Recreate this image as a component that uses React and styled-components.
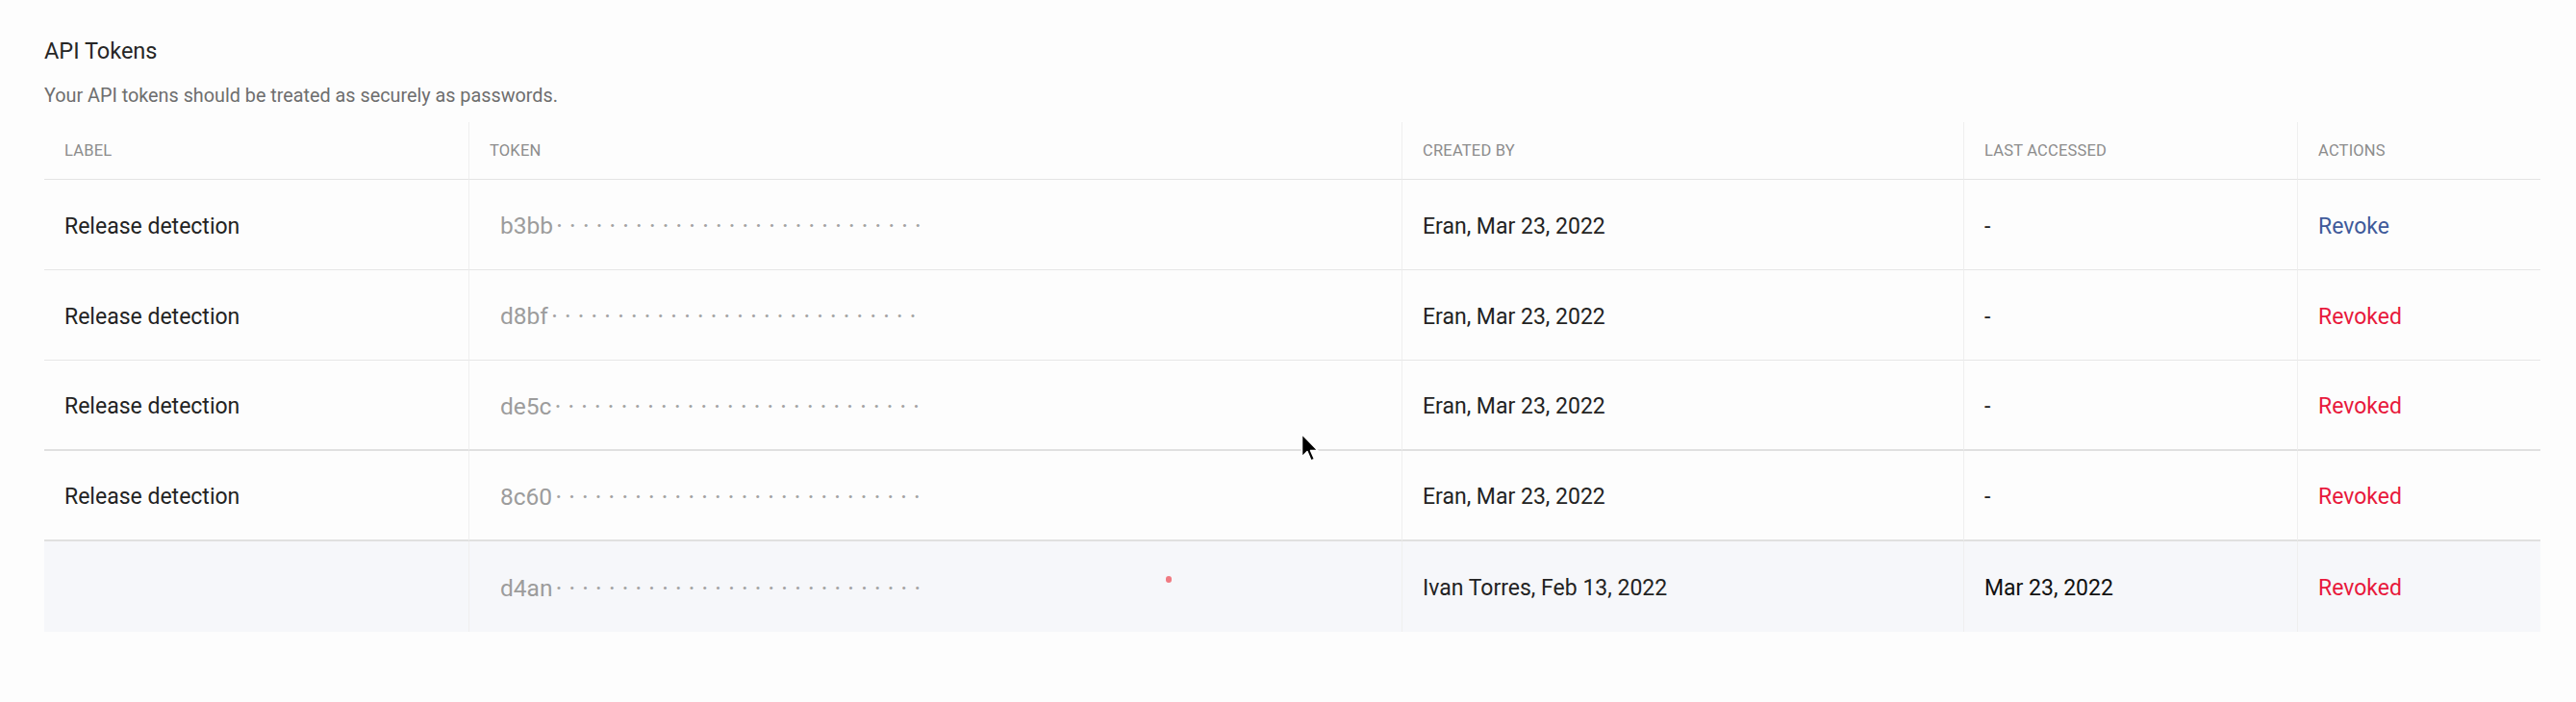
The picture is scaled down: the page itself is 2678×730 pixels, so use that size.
import React from "react";
import styled, { createGlobalStyle } from "styled-components";

const tokens = [
	{ id: 1, label: "Release detection", prefix: "b3bb", createdBy: "Eran, Mar 23, 2022", lastAccessed: "-", revoked: false },
	{ id: 2, label: "Release detection", prefix: "d8bf", createdBy: "Eran, Mar 23, 2022", lastAccessed: "-", revoked: true },
	{ id: 3, label: "Release detection", prefix: "de5c", createdBy: "Eran, Mar 23, 2022", lastAccessed: "-", revoked: true, thick: true },
	{ id: 4, label: "Release detection", prefix: "8c60", createdBy: "Eran, Mar 23, 2022", lastAccessed: "-", revoked: true, thick: true },
	{ id: 5, label: "", prefix: "d4an", createdBy: "Ivan Torres, Feb 13, 2022", lastAccessed: "Mar 23, 2022", revoked: true, shaded: true, marker: true },
];

const GlobalStyle = createGlobalStyle`
	body {
		margin: 0;
		background: #fdfdfd;
		font-family: Roboto, "Liberation Sans", sans-serif;
	}
`;

const App = () => {
	return (
		<>
			<GlobalStyle />
			<Page>
				<Title>API Tokens</Title>
				<Subtitle>Your API tokens should be treated as securely as passwords.</Subtitle>
				<Table>
					<colgroup>
						<col style={{ width: 441 }} />
						<col style={{ width: 970 }} />
						<col style={{ width: 584 }} />
						<col style={{ width: 347 }} />
						<col style={{ width: 253 }} />
					</colgroup>
					<thead>
						<tr>
							<Th>Label</Th>
							<Th>Token</Th>
							<Th>Created by</Th>
							<Th>Last accessed</Th>
							<Th>Actions</Th>
						</tr>
					</thead>
					<tbody>
						{tokens.map((token) => {
							const { id, label, prefix, createdBy, lastAccessed, revoked, thick, shaded, marker } = token;
							return (
								<Row key={id} $thick={thick} $shaded={shaded}>
									<Td>{label}</Td>
									<Td>
										<Token>
											{prefix}
											<Dots>{"·".repeat(28)}</Dots>
										</Token>
										{marker && <Marker />}
									</Td>
									<Td>{createdBy}</Td>
									<Td $dark={shaded}>{lastAccessed}</Td>
									<Td>
										<Action $revoked={revoked}>{revoked ? "Revoked" : "Revoke"}</Action>
									</Td>
								</Row>
							);
						})}
					</tbody>
				</Table>
				<Cursor width='20' height='32' viewBox='0 0 20 32'>
					<path d='M1.5 1.5 L1.5 25 L7 19.5 L11 29 L14.5 27.5 L10.5 18.5 L18 18.5 Z' fill='#000' stroke='#fff' strokeWidth='1.5' strokeLinejoin='round' />
				</Cursor>
			</Page>
		</>
	);
};

const Page = styled.div`
	position: relative;
	padding: 40px 37px 60px 46px;
`;

const Title = styled.h2`
	margin: 0;
	font-size: 23.5px;
	line-height: 26px;
	font-weight: 400;
	color: #262626;
`;

const Subtitle = styled.p`
	margin: 22px 0 0;
	font-size: 19.8px;
	line-height: 24px;
	color: #6e6e6e;
`;

const Table = styled.table`
	margin-top: 15px;
	width: 2595px;
	table-layout: fixed;
	border-collapse: separate;
	border-spacing: 0;
`;

const Th = styled.th`
	height: 60px;
	box-sizing: border-box;
	padding: 0 21px;
	text-align: left;
	font-size: 16.5px;
	font-weight: 400;
	letter-spacing: 0.2px;
	text-transform: uppercase;
	color: #8c8c8c;
	border-bottom: 1px solid #e4e4e4;
	& + & {
		border-left: 1px solid #efefef;
	}
`;

const Row = styled.tr`
	background: ${(p) => (p.$shaded ? "#f6f7fa" : "transparent")};
	td {
		border-bottom: ${(p) => (p.$thick ? "2px solid #e0e0e0" : "1px solid #e6e6e6")};
	}
	&:last-child td {
		border-bottom: none;
	}
`;

const Td = styled.td`
	position: relative;
	height: 94px;
	box-sizing: border-box;
	padding: 3px 21px 0;
	font-size: 23px;
	color: ${(p) => (p.$dark ? "#111" : "#232323")};
	vertical-align: middle;
	white-space: nowrap;
	& + & {
		border-left: 1px solid #efefef;
	}
`;

const Token = styled.span`
	margin-left: 11px;
	font-size: 24.5px;
	color: #9c9c9c;
`;

const Dots = styled.span`
	margin-left: 3px;
	font-size: 27px;
	letter-spacing: 6.75px;
	color: #a2a2a2;
	vertical-align: -1px;
`;

const Action = styled.span`
	cursor: pointer;
	color: ${(p) => (p.$revoked ? "#e8193c" : "#3f5a9a")};
`;

const Marker = styled.span`
	position: absolute;
	left: 724px;
	top: 36px;
	width: 6px;
	height: 7px;
	border-radius: 3px;
	background: #f07a82;
`;

const Cursor = styled.svg`
	position: absolute;
	left: 1352px;
	top: 450px;
	pointer-events: none;
`;

export default App;
